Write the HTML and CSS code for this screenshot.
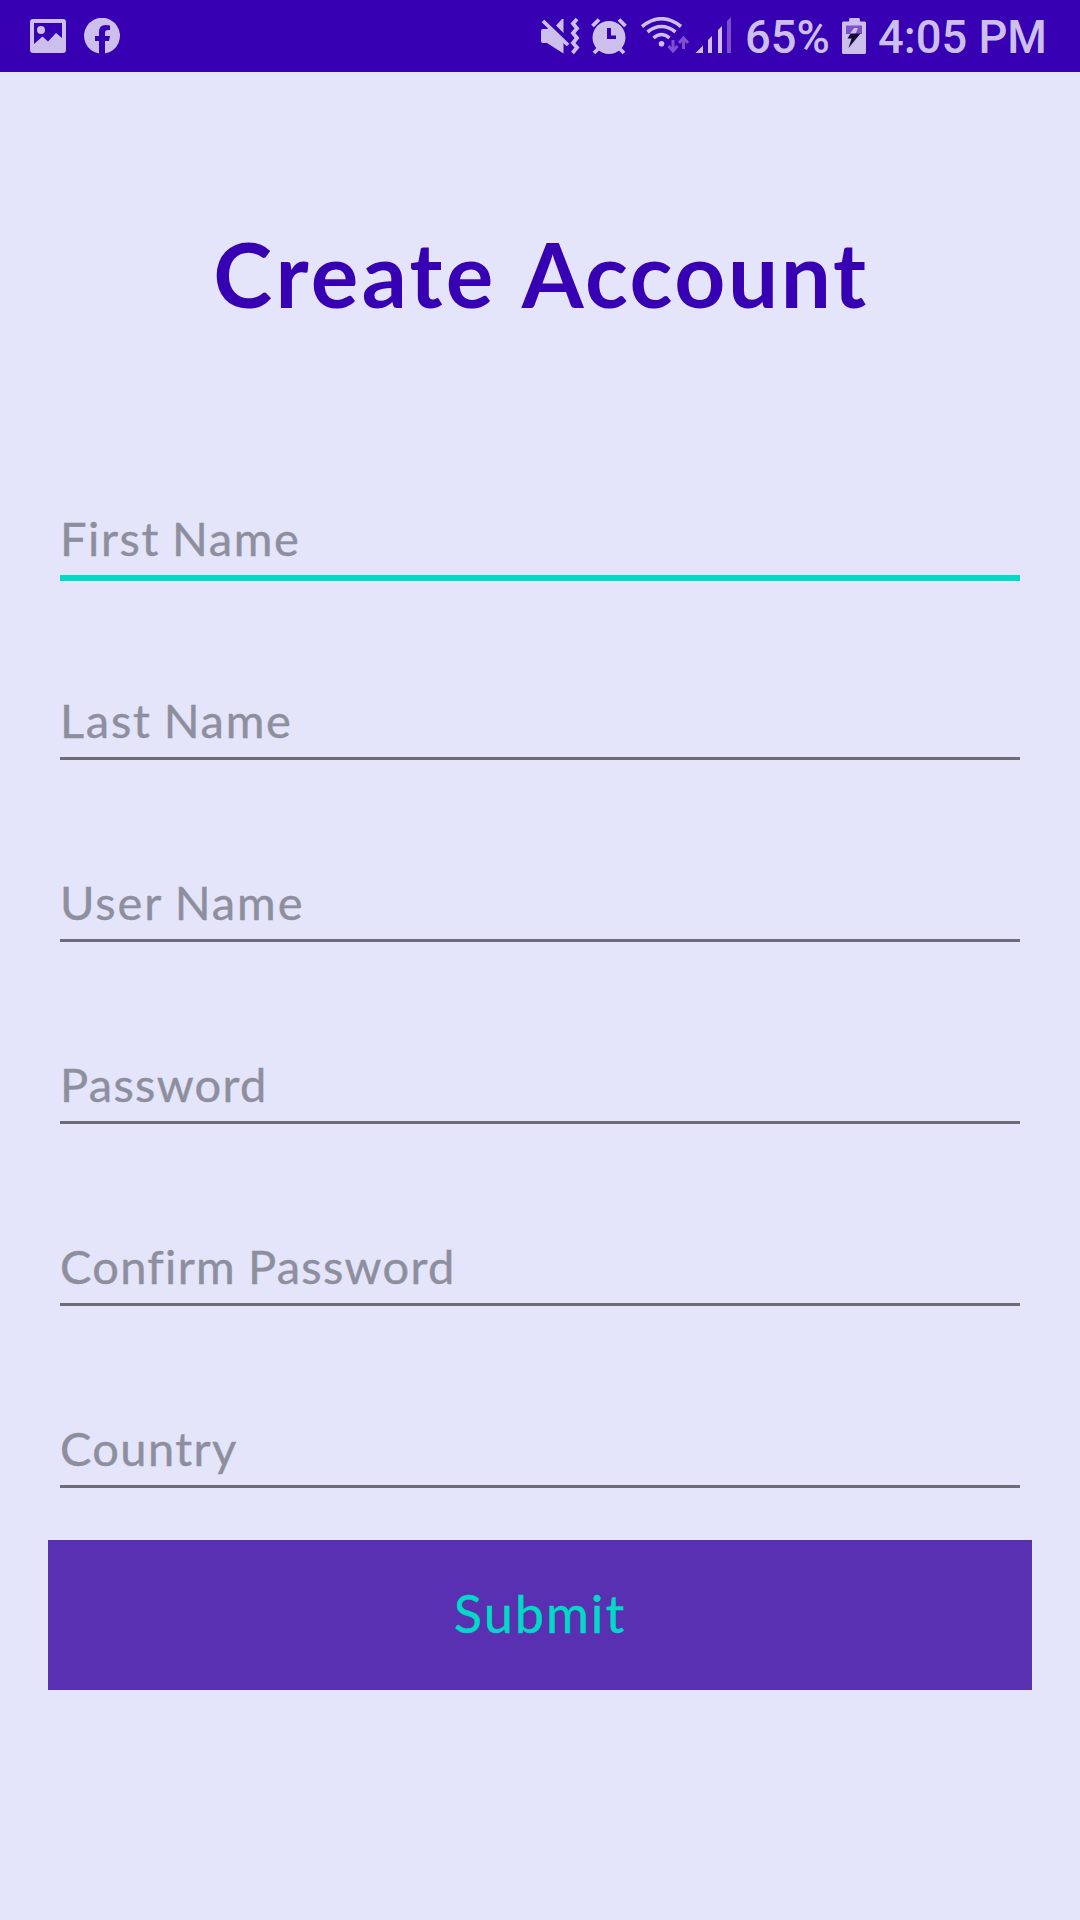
FILE: index.html
```html
<!DOCTYPE html>
<html lang="en">
<head>
<meta charset="utf-8">
<title>Create Account</title>
<link rel="stylesheet" href="styles.css">
</head>
<body>
<header class="status">
  <svg class="icon-picture" width="36" height="36" viewBox="30 18 36 36"><path fill-rule="evenodd" d="M33 19H63Q66 19 66 22V50Q66 53 63 53H33Q30 53 30 50V22Q30 19 33 19ZM34 23V44L42.500 36.500L48 41.500L56 33L62 38V23Z"/><circle cx="41" cy="30" r="4"/></svg>
  <svg class="icon-facebook" width="36" height="36" viewBox="84 18 36 36"><path d="M99 53.500A18 18 0 1 1 105 53.500V41H109L110 36H105V32.500Q105 30 108 30H110V25.500Q108 25 105.500 25Q99 25 99 32V36H95V41H99Z"/></svg>
  <svg class="icon-mute" width="40" height="38" viewBox="540 17 40 38"><path d="M543 29H547L563.500 45.500V53.500L553 43H543Q541 43 541 41V31Q541 29 543 29ZM547 29L551 27L563.500 39V53.500L547 43ZM556 25.500L562 19H563.500V33Z"/><path class="cut" d="M545.500 18.500L570.500 42.500" stroke-width="3"/><path class="line" d="M543 21L568 45" stroke-width="3.800"/><path class="line" d="M577 19L573 23.500L577 28.500L573 33L577 38L573 43L577 47.500L572.500 53" stroke-width="3.800"/></svg>
  <svg class="icon-alarm" width="38" height="38" viewBox="590 17 38 38"><path fill-rule="evenodd" d="M609 21A16.500 16.500 0 1 1 609 54A16.500 16.500 0 1 1 609 21ZM607 28V39H616V35.500H611V28Z"/><path class="line" d="M592.500 26L599 19.500M619 19.500L625.500 26M599 48L594 53M619 48L624 53" stroke-width="3.800"/></svg>
  <svg class="icon-wifi" width="48" height="38" viewBox="641 17 48 38"><path class="line" d="M642 26.500Q661.500 11 681 26.500M647.500 32Q661.500 21 675.500 32M653.500 38Q661.500 31 669.500 38" stroke-width="3.600"/><circle cx="661.500" cy="43.700" r="2.800"/><path class="line dim" d="M673 40V51M668.500 46L673 51L677.500 46M683.500 49V38M679 43L683.500 38L688 43" stroke-width="3"/></svg>
  <svg class="icon-signal" width="36" height="38" viewBox="695 16 36 38"><path d="M695.500 53L703 45.500V53ZM708 40L712 36V53H708ZM718 30L722 26V53H718Z"/><path class="dim" d="M727 21L731 17V53H727Z"/></svg>
  <span class="battery-level">65%</span>
  <svg class="icon-battery" width="24" height="36" viewBox="842 18 24 36"><path d="M850 18H859Q860 18 860 21.500H864.500Q866 21.500 866 23V52.500Q866 54 864.500 54H843.500Q842 54 842 52.500V23Q842 21.500 843.500 21.500H849Q849 18 850 18Z"/><path class="charge-empty" d="M846 25.500H862V34H846Z"/><path d="M854 28H858L855 35H849Z"/><path class="bolt" d="M850.500 33.500H860.500L848.500 48L851.500 38.500H847.500Z"/></svg>
  <span class="clock">4:05 PM</span>
</header>
<main>
  <h1>Create <span>Account</span></h1>
  <form class="fields">
    <div class="field active"><span class="first">First Name</span></div>
    <div class="field"><span class="last">Last Name</span></div>
    <div class="field"><span class="user">User Name</span></div>
    <div class="field"><span class="password">Password</span></div>
    <div class="field"><span class="confirm">Confirm Password</span></div>
    <div class="field"><span class="country">Country</span></div>
  </form>
  <button class="submit" type="button">Submit</button>
</main>
</body>
</html>
```
FILE: styles.css
```css
* { box-sizing: border-box; }
body {
  margin: 0;
  height: 1920px;
  background: #e4e4fa;
  font-family: Lato, "Open Sans", sans-serif;
}
.status {
  display: flex;
  align-items: flex-start;
  height: 72px;
  background: #3700b3;
  color: #cdbfec;
  font: 500 45.300px/72px Roboto, sans-serif;
  white-space: nowrap;
}
.status svg { flex: none; fill: #cdbfec; margin-top: 17px; }
.status .line { fill: none; stroke: #cdbfec; }
.status .cut { fill: none; stroke: #3700b3; }
.status .dim { fill: #7d50cd; }
.status .line.dim { fill: none; stroke: #7d50cd; }
.status .icon-picture { margin: 18px 0 0 30px; }
.status .icon-facebook { margin: 18px 0 0 18px; }
.status .icon-mute { margin-left: 420px; }
.status .icon-alarm { margin-left: 10px; }
.status .icon-wifi { margin-left: 13px; }
.status .icon-signal { margin: 16px 0 0 6px; }
.battery-level { width: 97px; margin-left: 14px; padding-top: 2px; }
.status .icon-battery { margin-top: 18px; }
.clock { margin-left: 12px; padding-top: 2px; }
.status .charge-empty { fill: #7d50cd; }
.status .bolt { fill: #160a3a; }

main { display: flex; flex-direction: column; padding: 0 48px; }
h1 {
  height: 403px;
  margin: 0;
  padding: 147px 0 0 2px;
  color: #3700b3;
  font-size: 89px;
  font-weight: 700;
  line-height: 110px;
  letter-spacing: 3.400px;
  word-spacing: 0;
  text-align: center;
  white-space: nowrap;
}
h1 span { letter-spacing: 2.600px; }
.fields { display: flex; flex-direction: column; gap: 73px; padding: 0 12px; }
.field {
  height: 109px;
  padding-top: 33px;
  color: #8e8f9e;
  font-size: 47px;
  line-height: 60px;
  letter-spacing: 1.300px;
  word-spacing: -1.500px;
  font-variant-ligatures: none;
  -webkit-text-stroke: 0.400px;
}
.field span { display: block; white-space: nowrap; }
.field .first { letter-spacing: 1.600px; }
.field .last { letter-spacing: 1.700px; }
.field .user { letter-spacing: 1.900px; }
.field .country { letter-spacing: 1.400px; }
.field::after { content: ""; display: block; height: 3px; margin-top: 7px; background: #6c6c77; }
.field.active::after { height: 6px; background: #03dac5; }
.submit {
  height: 150px;
  margin-top: 46px;
  padding: 0 0 4px;
  border: 0;
  background: #5a30b3;
  color: #03dac5;
  font: 400 52px/146px Lato, sans-serif;
  letter-spacing: 2.100px;
  -webkit-text-stroke: 0.500px;
}
```
